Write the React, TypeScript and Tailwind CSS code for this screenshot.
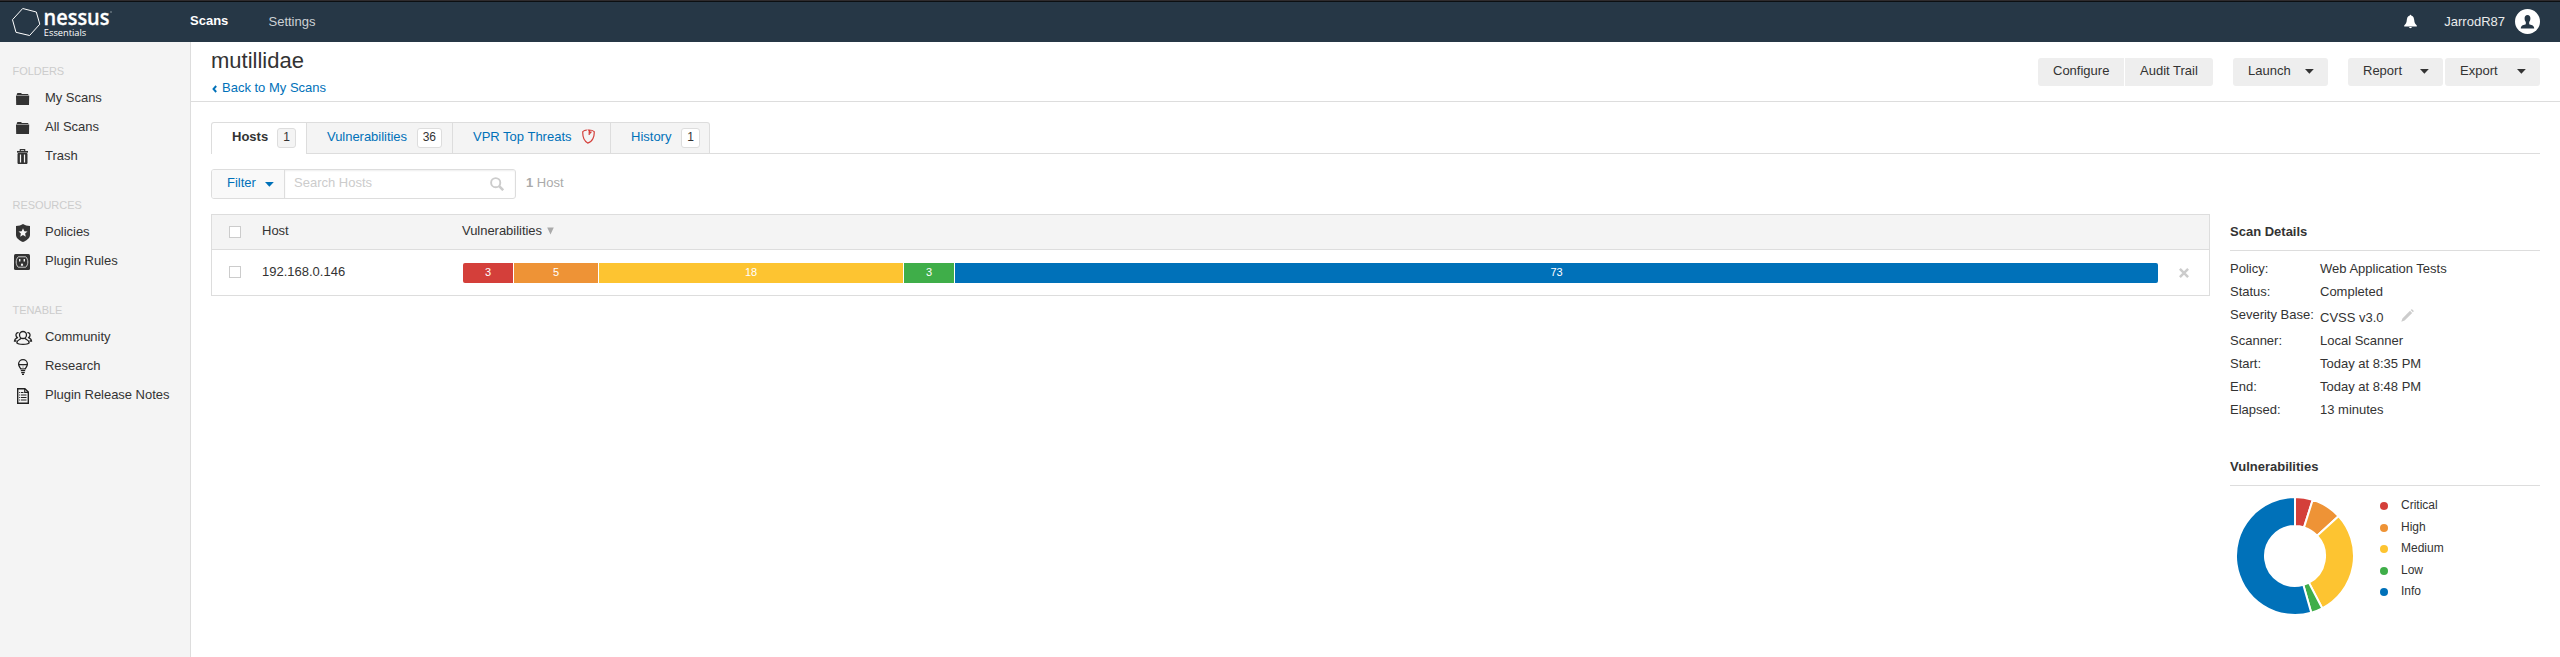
import type { ReactNode } from "react";

const Folder = () => (
  <svg width="18" height="18" viewBox="0 0 18 18" fill="#333">
    <path d="M2.800 5V4l.7-.9h3.600l.8.8h6l.5.6V5z" />
    <path d="M2 5.600h13.200l-.2 9.400H2.200z" />
  </svg>
);

const Trash = () => (
  <svg width="18" height="18" viewBox="0 0 18 18" fill="none" stroke="#333">
    <path d="M6.300 3.200V1.600h4.400v1.600" strokeWidth="1.200" />
    <path d="M3 3.800h11" strokeWidth="1.700" />
    <path d="M4 5.500v10h9v-10z" fill="#333" strokeWidth="1" />
    <path d="M6.500 6.500v8M10.500 6.500v8" stroke="#f4f4f4" strokeWidth="1.200" />
  </svg>
);

const Shield = () => (
  <svg width="18" height="18" viewBox="0 0 18 18">
    <path d="M9 0c1.800 1.300 4.200 1.900 7 1.900v9c0 3-3.400 5.600-7 7.100-3.600-1.500-7-4.100-7-7.100v-9C4.800 1.900 7.200 1.300 9 0z" fill="#333" />
    <path d="m9 4.200 1.300 3 3.200.3-2.400 2.100.7 3.200L9 11.100l-2.800 1.700.7-3.200L4.500 7.500l3.200-.3z" fill="#f4f4f4" />
  </svg>
);

const Outlet = () => (
  <svg className="-ml-px" width="18" height="18" viewBox="0 0 18 18">
    <rect x="1" y="1" width="16" height="16" rx="1.500" fill="#333" />
    <path d="M5.200 3.800h7.600c2.700 2.800 2.700 7.600 0 10.400H5.200c-2.700-2.800-2.700-7.600 0-10.400z" fill="none" stroke="#ddd" strokeWidth=".9" />
    <path d="M6.700 6v2.600M11.300 6v2.600" stroke="#f4f4f4" strokeWidth="1.400" />
    <path d="M7.900 12.700v-1a1.100 1.100 0 0 1 2.200 0v1z" fill="#f4f4f4" />
  </svg>
);

const Community = () => (
  <svg className="-ml-px" width="20" height="18" viewBox="0 0 20 18" fill="none" stroke="#222" strokeWidth="1.300">
    <circle cx="10" cy="6" r="3.500" />
    <path d="M8 9.200c-.2 1.500-4 1.400-4.200 4.700 1.700 2 10.700 2 12.400 0-.2-3.300-4-3.200-4.200-4.700" />
    <path d="M5.600 3.700C3.700 3.400 2.800 4.800 3 6.400c.1 1 .7 1.700 1.300 2.200C3.200 9.400 1.600 9.700 1.500 12h2M14.400 3.700c1.900-.3 2.800 1.100 2.600 2.700-.1 1-.7 1.700-1.300 2.200 1.100.8 2.700 1.100 2.800 3.400h-2" />
  </svg>
);

const Bulb = () => (
  <svg width="18" height="18" viewBox="0 0 18 18" fill="none" stroke="#222" strokeWidth="1.300">
    <path d="M6.800 10.900C6 9.100 4.600 8.200 4.600 6a4.400 4.400 0 0 1 8.800 0c0 2.200-1.400 3.100-2.200 4.900z" />
    <path d="M4.600 6.700h8.800M6.800 12.700h4.400M7.200 14.600h3.600M8 16.400h2" />
    <path d="M9 6.900v4" stroke="#999" strokeWidth=".8" />
  </svg>
);

const Doc = () => (
  <svg width="18" height="18" viewBox="0 0 18 18" fill="none" stroke="#222">
    <path d="M3.700 1.700h7.200l3.400 3.400v11.200H3.700z" strokeWidth="1.400" />
    <path d="M10.700 1.900v3.500h3.500" strokeWidth="1.100" />
    <path d="M5.200 5.500h1M5.200 8h1M5.200 10.500h1M5.200 13h1M7 5.500h2.500M7 8h5.500M7 10.500h5.500M7 13h5.500" strokeWidth="1.200" />
  </svg>
);

const Caret = ({ color = "#333" }: { color?: string }) => (
  <svg className="mt-[2px]" width="9" height="5" viewBox="0 0 9 5">
    <path d="M0 0h8.800L4.400 4.800z" fill={color} />
  </svg>
);

function NavItem({ icon, children }: { icon: ReactNode; children: ReactNode }) {
  return (
    <a className="flex h-[29px] items-center">
      <span className="mt-[3px] flex w-[45px] pl-[14px]">{icon}</span>
      <span className="tracking-[-0.03px]">{children}</span>
    </a>
  );
}

function NavLabel({ children }: { children: ReactNode }) {
  return <div className="mb-[2px] h-5 pl-[12.500px] text-[11px] leading-5 tracking-[-0.05px] text-[#ccc]">{children}</div>;
}

function Badge({ children, active }: { children: ReactNode; active?: boolean }) {
  return (
    <span
      className={
        "flex h-5 items-center justify-center rounded-[3px] border border-[#ddd] px-[5px] pb-[2px] text-[12px] text-[#333] " +
        (active ? "bg-[#f4f4f4]" : "bg-white")
      }
    >
      {children}
    </span>
  );
}

const button = "flex h-7 items-center bg-[#eee] pb-[3px] pl-[15px] leading-[15px]";

const segments = [
  { count: 3, width: 50, color: "bg-[#d43f3a]" },
  { count: 5, width: 84, color: "bg-[#ee9336]" },
  { count: 18, width: 304, color: "bg-[#fdc431]" },
  { count: 3, width: 50, color: "bg-[#3fae49]" },
  { count: 73, width: 1203, color: "bg-[#0071b9]" },
];

const details = [
  ["Policy:", "Web Application Tests"],
  ["Status:", "Completed"],
  ["Severity Base:", "CVSS v3.0"],
  ["Scanner:", "Local Scanner"],
  ["Start:", "Today at 8:35 PM"],
  ["End:", "Today at 8:48 PM"],
  ["Elapsed:", "13 minutes"],
];

const slices = [
  { name: "Critical", from: 0, to: 17.5, fill: "#d43f3a", dot: "bg-[#d43f3a]" },
  { name: "High", from: 17.5, to: 47.5, fill: "#ee9336", dot: "bg-[#ee9336]" },
  { name: "Medium", from: 47.5, to: 152.5, fill: "#fdc431", dot: "bg-[#fdc431]" },
  { name: "Low", from: 152.5, to: 164, fill: "#3fae49", dot: "bg-[#3fae49]" },
  { name: "Info", from: 164, to: 360, fill: "#0071b9", dot: "bg-[#0071b9]" },
];

function slicePath(from: number, to: number) {
  const at = (deg: number, r: number) => {
    const a = (deg * Math.PI) / 180;
    return `${(60 + r * Math.sin(a)).toFixed(2)} ${(60 - r * Math.cos(a)).toFixed(2)}`;
  };
  const large = to - from > 180 ? 1 : 0;
  return `M${at(from, 59)}A59 59 0 ${large} 1 ${at(to, 59)}L${at(to, 30)}A30 30 0 ${large} 0 ${at(from, 30)}Z`;
}

function TopBar() {
  return (
    <header className="flex h-[42px] shrink-0 items-start border-t border-[#2f2b2d] bg-[#263746] text-white shadow-[inset_0_1px_0_#0c0f12]">
      <svg className="mt-[-1px] shrink-0" width="190" height="42" viewBox="0 0 190 42">
        <path d="M22.700 8.500 36.300 12l3.500 12.200-10.200 11.300-13.600-3.200-3.500-12.600z" fill="none" stroke="#fff" strokeWidth="1" />
        <text x="43.500" y="25.300" fill="#fff" fontFamily="'Open Sans', sans-serif" fontWeight="600" fontSize="22" stroke="#fff" strokeWidth=".3" textLength="66" lengthAdjust="spacingAndGlyphs">nessus</text>
        <text x="43.800" y="36" fill="#fff" fontFamily="'Open Sans', sans-serif" fontSize="9" textLength="42.500" lengthAdjust="spacingAndGlyphs">Essentials</text>
        <circle cx="111" cy="12" r=".7" fill="#aab3ba" />
      </svg>
      <nav className="flex flex-1">
        <a className="mt-[12px] w-[78.500px] font-bold leading-[15px]">Scans</a>
        <a className="mt-[13px] leading-[15px] text-[#ccd1d5]">Settings</a>
      </nav>
      <svg className="mr-[27px] mt-[13px]" width="13" height="15" viewBox="0 0 13 15" fill="#fff">
        <path d="M5.600 1.700a.9.9 0 0 1 1.800 0c2.100.5 2.600 2.300 2.800 4.400.2 2.600.9 4 2.600 5.300v1.100H.200v-1.100c1.700-1.300 2.400-2.700 2.600-5.300.2-2.100.7-3.900 2.800-4.400zM5.200 13h2.600c-.2 1.600-2.400 1.600-2.600 0z" />
      </svg>
      <span className="mr-[10px] mt-[13px] leading-[15px] text-[#e9ebec]">JarrodR87</span>
      <svg className="mr-5 mt-[8px]" width="25" height="25" viewBox="0 0 25 25">
        <circle cx="12.500" cy="12.500" r="12.500" fill="#fff" />
        <path d="M12.500 6c1.900 0 2.900 1.300 2.900 3.300 0 1.700-.5 2.900-1.200 3.700v2.300c1.500.6 5 .9 5 4.200H5.800c0-3.300 3.500-3.600 5-4.200V13c-.7-.8-1.200-2-1.200-3.700 0-2 1-3.300 2.900-3.300z" fill="#263746" />
      </svg>
    </header>
  );
}

function Sidebar() {
  return (
    <aside className="w-[191px] shrink-0 border-r border-[#ddd] bg-[#f4f4f4] pt-[19px]">
      <NavLabel>FOLDERS</NavLabel>
      <NavItem icon={<Folder />}>My Scans</NavItem>
      <NavItem icon={<Folder />}>All Scans</NavItem>
      <NavItem icon={<Trash />}>Trash</NavItem>
      <div className="h-[25px]" />
      <NavLabel>RESOURCES</NavLabel>
      <NavItem icon={<Shield />}>Policies</NavItem>
      <NavItem icon={<Outlet />}>Plugin Rules</NavItem>
      <div className="h-[25px]" />
      <NavLabel>TENABLE</NavLabel>
      <NavItem icon={<Community />}>Community</NavItem>
      <NavItem icon={<Bulb />}>Research</NavItem>
      <NavItem icon={<Doc />}>Plugin Release Notes</NavItem>
    </aside>
  );
}

function PageHeader() {
  return (
    <div className="flex h-[60px] justify-between border-b border-[#ddd] pl-[20px] pr-5">
      <div className="pt-[6px]">
        <h1 className="h-[25px] text-[22px] leading-[25px]">mutillidae</h1>
        <a className="mt-[5px] flex h-[19px] items-center text-[#0071b9]">
          <svg className="ml-px mr-[5px] mt-[2px]" width="5" height="8" viewBox="0 0 5 8">
            <path d="M4.200 1 1.500 4l2.700 3" fill="none" stroke="#0071b9" strokeWidth="1.900" />
          </svg>
          Back to My Scans
        </a>
      </div>
      <div className="flex pt-[16px]">
        <button className={button + " mr-px w-[86px] rounded-l-[3px]"}>Configure</button>
        <button className={button + " mr-5 w-[88px] rounded-r-[3px]"}>Audit Trail</button>
        <button className={button + " mr-5 w-[95px] justify-between rounded-[3px] pr-[14px]"}>
          Launch <Caret />
        </button>
        <button className={button + " mr-[2px] w-[95px] justify-between rounded-[3px] pr-[14px]"}>
          Report <Caret />
        </button>
        <button className={button + " w-[95px] justify-between rounded-[3px] pr-[14px]"}>
          Export <Caret />
        </button>
      </div>
    </div>
  );
}

function Tabs() {
  const tab =
    "flex h-8 items-start border-t border-r border-b border-[#ddd] bg-[#f4f4f4] pl-[20px] pt-[5px] text-[#0071b9]";
  const label = "pt-px leading-[15px]";
  return (
    <div className="flex h-8 shadow-[inset_0_-1px_0_#ddd]">
      <div className="flex h-8 w-[96px] items-start justify-between rounded-tl-[3px] border-l border-r border-t border-[#ddd] bg-white pl-[20px] pr-[10px] pt-[5px]">
        <span className={label + " font-bold"}>Hosts</span>
        <Badge active>1</Badge>
      </div>
      <div className={tab + " w-[146px] justify-between pr-[10px]"}>
        <span className={label + " tracking-[-0.03px]"}>Vulnerabilities</span>
        <Badge>36</Badge>
      </div>
      <div className={tab + " w-[158px] justify-between pr-[15px]"}>
        <span className={label}>VPR Top Threats</span>
        <svg className="mt-px" width="13" height="15" viewBox="0 0 13 15" fill="none" stroke="#d43f3a" strokeWidth="1.200">
          <path d="M4.800 1.200C3.300 1.100 2 1.600.8 2.600c-.3 4.500.7 9.100 4.900 11.500 4.800-1 6.800-6.500 6.500-11.500C10.700 1.300 8.800.9 6.600 1c1 .9 1.500 2 1.300 3.300M7.900 4.300C8.400 3.800 9.300 3.400 9.200 2.500M7.200 2.300v3.800" />
        </svg>
      </div>
      <div className={tab + " w-[99px] justify-between rounded-tr-[3px] pr-[9px]"}>
        <span className={label}>History</span>
        <Badge>1</Badge>
      </div>
    </div>
  );
}

function SearchRow() {
  return (
    <div className="mt-[15px] flex h-[30px] leading-[15px]">
      <div className="flex w-[305px] overflow-hidden rounded-[3px] border border-[#ddd]">
        <div className="flex w-[73px] items-center border-r border-[#ddd] bg-[#f9f9f9] pb-[3px] pl-[15px] text-[#0071b9]">
          Filter
          <span className="ml-[9px] mt-px flex">
            <Caret color="#0071b9" />
          </span>
        </div>
        <div className="flex flex-1 items-center justify-between pl-[9px] pr-[11px] shadow-[inset_0_1px_2px_#eee]">
          <span className="pb-[3px] text-[#ccc]">Search Hosts</span>
          <svg width="14" height="14" viewBox="0 0 14 14" fill="none" stroke="#ccc">
            <circle cx="5.700" cy="5.700" r="4.600" strokeWidth="1.900" />
            <path d="m9.200 9.200 4 4" strokeWidth="2.600" />
          </svg>
        </div>
      </div>
      <div className="ml-[10px] pt-[6px] text-[#aaa]">
        <b>1</b> Host
      </div>
    </div>
  );
}

const Checkbox = () => <span className="h-3 w-3 border border-[#ccc] bg-white" />;

function HostTable() {
  return (
    <div className="mt-[15px] h-[82px] w-[1999px] border border-[#ddd] leading-[15px]">
      <div className="flex h-[35px] items-center border-b border-[#ddd] bg-[#f4f4f4] pl-[17px]">
        <Checkbox />
        <span className="ml-[21px] w-[201px] pb-[3px]">Host</span>
        <span className="-ml-px pb-[3px] tracking-[-0.03px]">Vulnerabilities</span>
        <svg className="mb-[3px] ml-[5px]" width="7" height="8" viewBox="0 0 7 8">
          <path d="M.2.500h6.600L3.500 7.500z" fill="#aaa" />
        </svg>
      </div>
      <div className="flex h-[44px] items-center pl-[17px]">
        <Checkbox />
        <span className="ml-[21px] w-[201px] pb-px">192.168.0.146</span>
        <div className="mt-[2px] flex h-5 gap-px overflow-hidden rounded-[2px]">
          {segments.map((s, i) => (
            <span key={i} className={"text-center text-[11px] leading-[19px] text-white " + s.color} style={{ width: s.width }}>
              {s.count}
            </span>
          ))}
        </div>
        <svg className="ml-[21px] mt-[2px]" width="10" height="10" viewBox="0 0 10 10">
          <path d="m.9.900 8.200 8.200m0-8.200L.9 9.100" stroke="#ccc" strokeWidth="2.500" />
        </svg>
      </div>
    </div>
  );
}

function DetailsPanel() {
  return (
    <aside className="w-[310px] pt-[25px] leading-[15px]">
      <h2 className="h-[27px] border-b border-[#ddd] font-bold">Scan Details</h2>
      <dl className="pt-[6px]">
        {details.map(([label, value]) => {
          const editable = label === "Severity Base:";
          return (
            <div key={label} className={editable ? "flex h-[26px]" : "flex h-[23px]"}>
              <dt className="w-[90px] pt-[4px]">{label}</dt>
              <dd className={editable ? "flex pt-[7px]" : "pt-[4px]"}>
                {value}
                {editable && (
                  <svg className="-mt-px ml-[17px]" width="13" height="13" viewBox="0 0 13 13" fill="#ccc">
                    <path d="m.3 12.700 1.100-3.300L9 1.800l2.200 2.200-7.600 7.600zM9.700 1.100l.6-.6c.7-.7 2.900 1.500 2.200 2.200l-.6.6z" />
                  </svg>
                )}
              </dd>
            </div>
          );
        })}
      </dl>
      <h2 className="mt-[38px] h-[27px] border-b border-[#ddd] font-bold">Vulnerabilities</h2>
      <div className="flex pl-[5px] pt-[10px]">
        <svg width="120" height="120" viewBox="0 0 120 120">
          {slices.map((s) => (
            <path key={s.name} d={slicePath(s.from, s.to)} fill={s.fill} stroke="#fff" strokeWidth="2" />
          ))}
        </svg>
        <ul className="-mt-px ml-[25px] text-[12px]">
          {slices.map((s) => (
            <li key={s.name} className="flex h-[21.500px] items-center">
              <span className={"mr-[13px] mt-px h-2 w-2 rounded-full " + s.dot} />
              {s.name}
            </li>
          ))}
        </ul>
      </div>
    </aside>
  );
}

export default function App() {
  return (
    <div className="flex h-[657px] w-[2560px] flex-col overflow-hidden bg-white font-['Liberation_Sans',Arial,sans-serif] text-[13px] text-[#333]">
      <TopBar />
      <div className="flex flex-1">
        <Sidebar />
        <main className="flex-1">
          <PageHeader />
          <div className="pl-[20px] pr-5 pt-[20px]">
            <Tabs />
            <SearchRow />
            <div className="flex justify-between">
              <HostTable />
              <DetailsPanel />
            </div>
          </div>
        </main>
      </div>
    </div>
  );
}
